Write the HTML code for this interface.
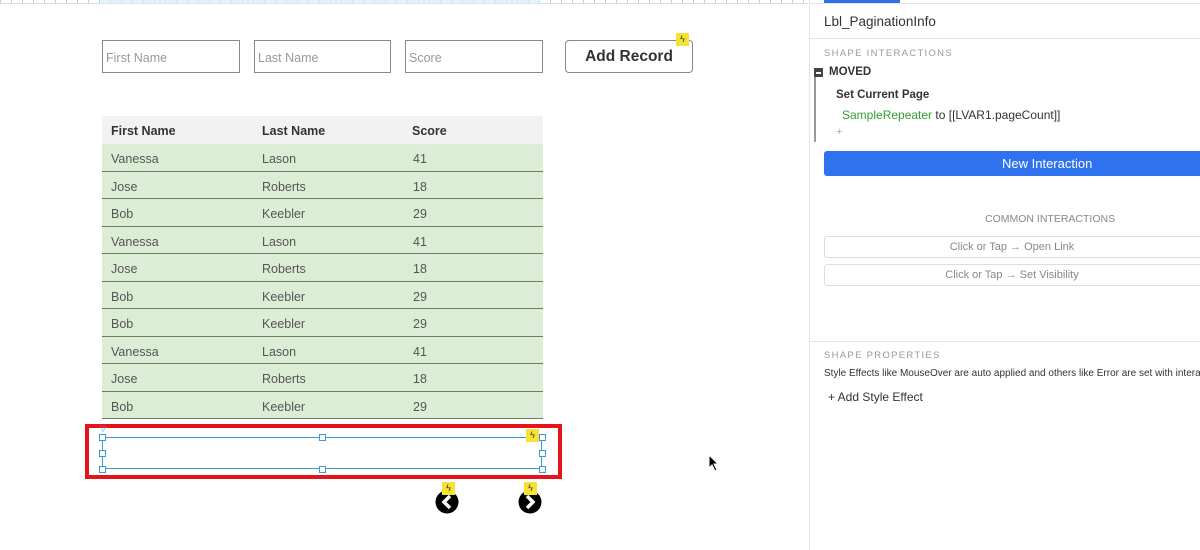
<!DOCTYPE html>
<html><head><meta charset="utf-8"><style>
*{margin:0;padding:0;box-sizing:border-box}
body{width:1200px;height:550px;overflow:hidden;background:#fff;font-family:"Liberation Sans",Arial,sans-serif;position:relative}
.a{position:absolute}
.inp{position:absolute;top:40px;height:33px;border:1px solid #888;font-size:12.5px;color:#999;padding:10px 0 0 3px}
.row{position:absolute;left:102px;width:441px;height:27.5px;background:#dcedd6;border-bottom:1.5px solid #6b7e64;font-size:12.5px;color:#555}
.row span,.hd span{position:absolute;top:8px}
.bolt{position:absolute;width:13px;height:13px;background:#f5e233;font-size:9px;text-align:center;line-height:13px;color:#333}
.h{position:absolute;width:7px;height:7px;border:1px solid #3a9ad9;background:#fff}
.p{font-family:"Liberation Sans",Arial,sans-serif}
.cbox{position:absolute;left:824px;width:390px;height:22px;border:1px solid #ddd;border-radius:3px;font-size:11px;color:#888;text-align:center;line-height:20px}
</style></head><body>
<div class="a" style="left:0;top:0;width:808px;height:4px;border-bottom:1px solid #ddd;background:repeating-linear-gradient(90deg,#ccc 0 1px,transparent 1px 11px)"></div>
<div class="a" style="left:100px;top:0;width:440px;height:4px;background:#d9ecf8;opacity:.7"></div>

<div class="inp" style="left:102px;width:138px">First Name</div>
<div class="inp" style="left:254px;width:137px">Last Name</div>
<div class="inp" style="left:405px;width:138px">Score</div>
<div class="a" style="left:565px;top:40px;width:128px;height:33px;border:1px solid #888;border-radius:4px;font-size:15.5px;font-weight:bold;color:#333;text-align:center;line-height:31px">Add Record</div>
<div class="bolt" style="left:676px;top:33px">ϟ</div>

<div class="a hd" style="left:102px;top:116px;width:441px;height:28px;background:#f2f2f2;font-size:12.5px;font-weight:bold;color:#333"><span style="left:9px">First Name</span><span style="left:160px">Last Name</span><span style="left:310px">Score</span></div>
<div class="row" style="top:144px"><span style="left:9px">Vanessa</span><span style="left:160px">Lason</span><span style="left:311px">41</span></div>
<div class="row" style="top:171.5px"><span style="left:9px">Jose</span><span style="left:160px">Roberts</span><span style="left:311px">18</span></div>
<div class="row" style="top:199px"><span style="left:9px">Bob</span><span style="left:160px">Keebler</span><span style="left:311px">29</span></div>
<div class="row" style="top:226.5px"><span style="left:9px">Vanessa</span><span style="left:160px">Lason</span><span style="left:311px">41</span></div>
<div class="row" style="top:254px"><span style="left:9px">Jose</span><span style="left:160px">Roberts</span><span style="left:311px">18</span></div>
<div class="row" style="top:281.5px"><span style="left:9px">Bob</span><span style="left:160px">Keebler</span><span style="left:311px">29</span></div>
<div class="row" style="top:309px"><span style="left:9px">Bob</span><span style="left:160px">Keebler</span><span style="left:311px">29</span></div>
<div class="row" style="top:336.5px"><span style="left:9px">Vanessa</span><span style="left:160px">Lason</span><span style="left:311px">41</span></div>
<div class="row" style="top:364px"><span style="left:9px">Jose</span><span style="left:160px">Roberts</span><span style="left:311px">18</span></div>
<div class="row" style="top:391.5px"><span style="left:9px">Bob</span><span style="left:160px">Keebler</span><span style="left:311px">29</span></div>

<div class="a" style="left:85px;top:424px;width:477px;height:55px;border:4px solid #e5141a"></div>
<div class="a" style="left:102px;top:437px;width:440px;height:32px;border:1px solid #3a9ad9"></div>
<div class="h" style="left:99px;top:434px"></div><div class="h" style="left:319px;top:434px"></div><div class="h" style="left:539px;top:434px"></div>
<div class="h" style="left:99px;top:450px"></div><div class="h" style="left:539px;top:450px"></div>
<div class="h" style="left:99px;top:466px"></div><div class="h" style="left:319px;top:466px"></div><div class="h" style="left:539px;top:466px"></div>
<div class="a" style="left:100px;top:424px;font-size:8px;color:#3a9ad9">▽</div>
<div class="bolt" style="left:526px;top:429px">ϟ</div>

<svg class="a" style="left:434px;top:489px" width="26" height="26"><circle cx="13" cy="13" r="11.5" fill="#000"/><path d="M16 7 L10 13 L16 19" stroke="#fff" stroke-width="3.5" fill="none"/></svg>
<svg class="a" style="left:517px;top:489px" width="26" height="26"><circle cx="13" cy="13" r="11.5" fill="#000"/><path d="M10 7 L16 13 L10 19" stroke="#fff" stroke-width="3.5" fill="none"/></svg>
<div class="bolt" style="left:442px;top:482px">ϟ</div>
<div class="bolt" style="left:524px;top:482px">ϟ</div>

<svg class="a" style="left:708px;top:454px" width="12" height="18"><path d="M1 1 L1 14 L4 11 L7 17 L9 16 L6 10 L10 10 Z" fill="#000" stroke="#fff" stroke-width="1"/></svg>

<!-- panel -->
<div class="a" style="left:809px;top:0;width:1px;height:550px;background:#e3e3e3"></div>
<div class="a" style="left:824px;top:0;width:76px;height:3px;background:#2f6fe8"></div>
<div class="a" style="left:810px;top:3px;width:390px;height:1px;background:#e5e5e5"></div>
<div class="a p" style="left:824px;top:14px;font-size:13.5px;color:#333">Lbl_PaginationInfo</div>
<div class="a" style="left:810px;top:38px;width:390px;height:1px;background:#e5e5e5"></div>
<div class="a p" style="left:824px;top:48px;font-size:9.5px;letter-spacing:1.3px;color:#999">SHAPE INTERACTIONS</div>
<div class="a" style="left:814px;top:68px;width:9px;height:9px;background:#444"></div>
<div class="a" style="left:816px;top:72px;width:5px;height:1.5px;background:#fff"></div>
<div class="a" style="left:814px;top:77px;width:2px;height:65px;background:#999"></div>
<div class="a p" style="left:829px;top:66px;font-size:11.5px;font-weight:bold;color:#333">MOVED</div>
<div class="a p" style="left:836px;top:89px;font-size:11.5px;font-weight:bold;color:#333">Set Current Page</div>
<div class="a p" style="left:842px;top:108px;font-size:12px;color:#333"><span style="color:#2f9e2f">SampleRepeater</span> to [[LVAR1.pageCount]]</div>
<div class="a p" style="left:836px;top:126px;font-size:11px;color:#aaa">+</div>
<div class="a p" style="left:824px;top:151px;width:390px;height:25px;background:#2f72f0;border-radius:3px;color:#fff;font-size:13px;line-height:25px;padding-left:178px">New Interaction</div>
<div class="a p" style="left:985px;top:213px;font-size:10.5px;color:#888">COMMON INTERACTIONS</div>
<div class="cbox p" style="top:236px;padding-right:14px">Click or Tap → Open Link</div>
<div class="cbox p" style="top:264px;padding-right:14px">Click or Tap → Set Visibility</div>
<div class="a" style="left:810px;top:341px;width:390px;height:1px;background:#e5e5e5"></div>
<div class="a p" style="left:824px;top:350px;font-size:9.5px;letter-spacing:1.3px;color:#999">SHAPE PROPERTIES</div>
<div class="a p" style="left:824px;top:368px;font-size:10px;color:#333;white-space:nowrap">Style Effects like MouseOver are auto applied and others like Error are set with interactions</div>
<div class="a p" style="left:828px;top:390px;font-size:12px;color:#333">+ Add Style Effect</div>
</body></html>
